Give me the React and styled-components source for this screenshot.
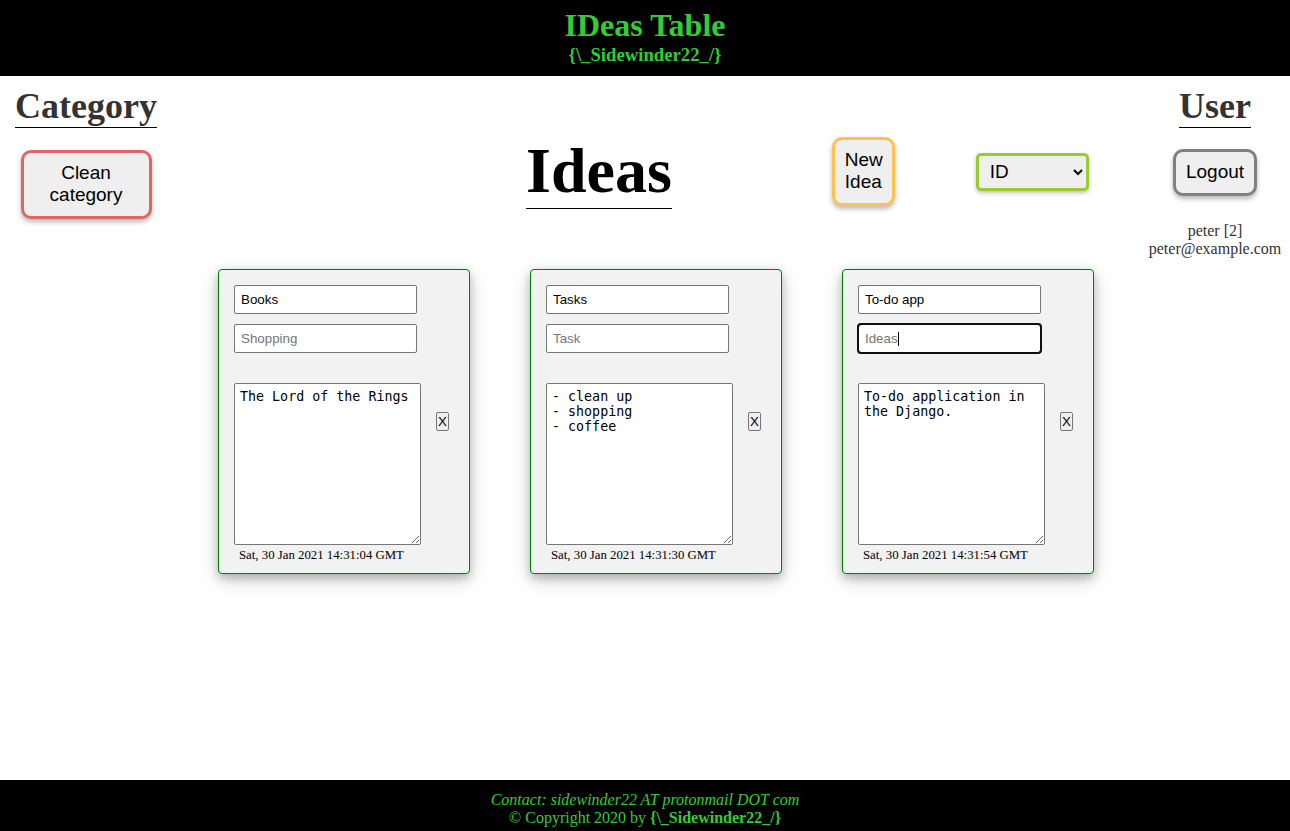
import React from "react";
import styled, { createGlobalStyle, css } from "styled-components";

const GlobalStyle = createGlobalStyle`
  html, body { margin: 0; padding: 0; }
  body { font-family: "Liberation Serif", "Times New Roman", serif; background: #fff; }
  * { box-sizing: border-box; }
`;

const GREEN = "#32cd32";

const Page = styled.div`
  min-height: 100vh;
  display: flex;
  flex-direction: column;
`;

const Header = styled.header`
  background: #000;
  color: ${GREEN};
  text-align: center;
  height: 76px;
  padding-top: 7px;
`;

const Title = styled.h1`
  margin: 0;
  font-size: 32px;
  font-weight: bold;
  line-height: normal;
`;

const Subtitle = styled.h3`
  margin: 0;
  font-size: 18.72px;
  font-weight: bold;
  line-height: normal;
`;

const Main = styled.main`
  flex: 1;
  display: grid;
  grid-template-columns: 172px 1fr 150px;
  align-items: start;
`;

const SideColumn = styled.aside`
  display: flex;
  flex-direction: column;
  align-items: center;
  padding-top: 9px;
`;

const SideHeading = styled.h2`
  display: inline-block;
  margin: 0;
  font-size: 36px;
  font-weight: bold;
  line-height: normal;
  color: #333;
  border-bottom: 1px solid #000;
`;

const ActionButton = styled.button`
  font-family: "Liberation Sans", Arial, sans-serif;
  font-size: 19px;
  line-height: normal;
  color: #000;
  background: #efefef;
  border: 3px solid ${(p) => p.$color};
  border-radius: 10px;
  padding: 9px 10px 10px;
  box-shadow: 0 3px 5px rgba(0, 0, 0, 0.28);
  cursor: pointer;
  ${(p) => p.$width && css`width: ${p.$width}px;`}
  ${(p) => p.$mt && css`margin-top: ${p.$mt}px;`}
  ${(p) => p.$ml && css`margin-left: ${p.$ml}px;`}
`;

const UserInfo = styled.div`
  margin-top: 26px;
  text-align: center;
  color: #333;
  font-size: 16px;
  line-height: 18px;
  white-space: nowrap;
`;

const Center = styled.section`
  padding-top: 58px;
  display: flex;
  flex-direction: column;
`;

const Toolbar = styled.div`
  display: flex;
  align-items: center;
`;

const MainHeading = styled.h1`
  margin: 0 0 0 354px;
  font-size: 64px;
  font-weight: bold;
  line-height: normal;
  color: #000;
  border-bottom: 1px solid #000;
`;

const SortSelect = styled.select`
  margin-left: 81px;
  width: 113px;
  height: 38px;
  font-family: "Liberation Sans", Arial, sans-serif;
  font-size: 19px;
  color: #000;
  background: #efefef;
  border: 3px solid #99cc33;
  border-radius: 5px;
  padding: 0 4px 0 7px;
  box-shadow: 0 2px 4px rgba(0, 0, 0, 0.25);
`;

const CardGrid = styled.div`
  margin-top: 60px;
  display: flex;
  justify-content: center;
  align-items: flex-start;
  gap: 60px;
`;

const Card = styled.div`
  width: 252px;
  height: 305px;
  background: #f2f2f2;
  border: 1px solid #008000;
  border-radius: 4px;
  padding: 15px 15px 0;
  box-shadow: 0 4px 8px 0 rgba(0, 0, 0, 0.2), 0 6px 20px 0 rgba(0, 0, 0, 0.19);
`;

const Field = styled.div`
  position: relative;
  width: 183px;
  margin-bottom: ${(p) => p.$mb}px;
`;

const TextInput = styled.input`
  display: block;
  width: 183px;
  height: 29px;
  font-family: "Liberation Sans", Arial, sans-serif;
  font-size: 13.33px;
  color: #000;
  background: #fff;
  border: 1px solid #767676;
  border-radius: 2px;
  padding: 0 6px;
  &::placeholder { color: #757575; }
  ${(p) =>
    p.$focused &&
    css`
      outline: 2px solid #101010;
      outline-offset: -1px;
      border-radius: 3px;
    `}
`;

const Caret = styled.span`
  position: absolute;
  left: 40px;
  top: 8px;
  width: 1px;
  height: 14px;
  background: #000;
`;

const BodyRow = styled.div`
  display: flex;
  align-items: flex-start;
`;

const BodyText = styled.textarea`
  display: block;
  width: 187px;
  height: 162px;
  font-family: "DejaVu Sans Mono", monospace;
  font-size: 13.33px;
  line-height: 15px;
  color: #000;
  background: #fff;
  border: 1px solid #767676;
  border-radius: 2px;
  padding: 5px;
  resize: both;
`;

const DeleteButton = styled.button`
  margin: 29px 0 0 15px;
  width: 13px;
  height: 19px;
  padding: 0;
  font-family: "Liberation Sans", Arial, sans-serif;
  font-size: 13.33px;
  line-height: 17px;
  color: #000;
  background: #efefef;
  border: 1px solid #767676;
  border-radius: 2px;
`;

const DateLine = styled.div`
  padding: 3px 0 0 5px;
  font-size: 12.8px;
  line-height: 15px;
  color: #000;
  white-space: nowrap;
`;

const Footer = styled.footer`
  background: #000;
  color: ${GREEN};
  text-align: center;
  font-size: 16px;
  line-height: 18px;
  height: 51px;
  padding-top: 11px;
`;

const Contact = styled.div`
  font-style: italic;
`;

const ideas = [
  {
    title: "Books",
    category: "Shopping",
    text: "The Lord of the Rings",
    date: "Sat, 30 Jan 2021 14:31:04 GMT",
  },
  {
    title: "Tasks",
    category: "Task",
    text: "- clean up\n- shopping\n- coffee",
    date: "Sat, 30 Jan 2021 14:31:30 GMT",
  },
  {
    title: "To-do app",
    category: "Ideas",
    text: "To-do application in\nthe Django.",
    date: "Sat, 30 Jan 2021 14:31:54 GMT",
    focused: true,
  },
];

function IdeaCard({ idea }) {
  return (
    <Card>
      <Field $mb={10}>
        <TextInput defaultValue={idea.title} />
      </Field>
      <Field $mb={30}>
        <TextInput placeholder={idea.category} $focused={idea.focused} />
        {idea.focused && <Caret />}
      </Field>
      <BodyRow>
        <BodyText defaultValue={idea.text} />
        <DeleteButton>X</DeleteButton>
      </BodyRow>
      <DateLine>{idea.date}</DateLine>
    </Card>
  );
}

export default function App() {
  return (
    <>
      <GlobalStyle />
      <Page>
        <Header>
          <Title>IDeas Table</Title>
          <Subtitle>{"{\\_Sidewinder22_/}"}</Subtitle>
        </Header>
        <Main>
          <SideColumn>
            <SideHeading>Category</SideHeading>
            <ActionButton $color="#e06666" $width={131} $mt={22}>
              Clean category
            </ActionButton>
          </SideColumn>
          <Center>
            <Toolbar>
              <MainHeading>Ideas</MainHeading>
              <ActionButton $color="#ffc34d" $width={63} $ml={160}>
                New Idea
              </ActionButton>
              <SortSelect defaultValue="id">
                <option value="id">ID</option>
                <option value="title">Title</option>
                <option value="date">Date</option>
              </SortSelect>
            </Toolbar>
            <CardGrid>
              {ideas.map((idea) => (
                <IdeaCard key={idea.title} idea={idea} />
              ))}
            </CardGrid>
          </Center>
          <SideColumn>
            <SideHeading>User</SideHeading>
            <ActionButton $color="#808080" $mt={21}>
              Logout
            </ActionButton>
            <UserInfo>
              peter [2]
              <br />
              peter@example.com
            </UserInfo>
          </SideColumn>
        </Main>
        <Footer>
          <Contact>Contact: sidewinder22 AT protonmail DOT com</Contact>
          <div>
            © Copyright 2020 by <b>{"{\\_Sidewinder22_/}"}</b>
          </div>
        </Footer>
      </Page>
    </>
  );
}
